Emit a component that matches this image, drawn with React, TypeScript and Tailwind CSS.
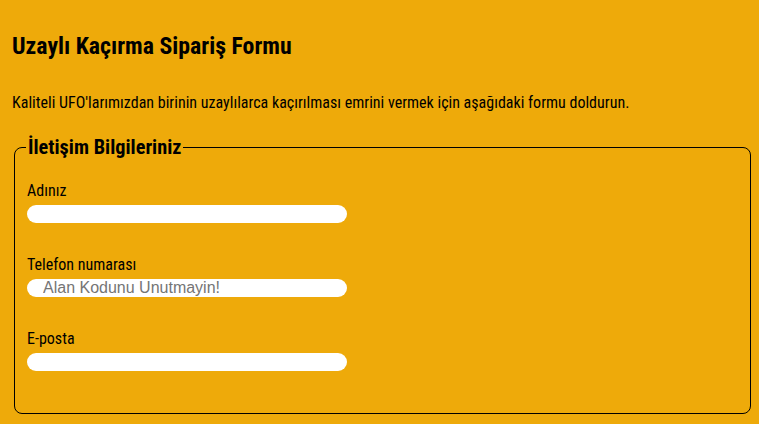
import React from 'react';

export default function App() {
  const fields = [
    { id: 'name', label: 'Adınız', placeholder: '' },
    { id: 'phone', label: 'Telefon numarası', placeholder: 'Alan Kodunu Unutmayin!' },
    { id: 'email', label: 'E-posta', placeholder: '' },
  ];

  return (
    <div className="min-h-[424px] bg-[#eeaa0a] pl-3 pr-2 pt-[32px] text-black font-['Roboto',sans-serif] [font-stretch:condensed]">
      <h1 className="text-[23.8px] font-bold leading-[28px]">Uzaylı Kaçırma Sipariş Formu</h1>
      <p className="mt-[33px] text-[16px] leading-[20px]">
        Kaliteli UFO'larımızdan birinin uzaylılarca kaçırılması emrini vermek için aşağıdaki formu doldurun.
      </p>

      <fieldset className="mt-[22px] ml-[2px] border border-black rounded-lg px-3 pb-[42px]">
        <legend className="-ml-px px-[2px] text-[20.3px] font-bold leading-[24px]">İletişim Bilgileriniz</legend>
        {fields.map((f, i) => (
          <div key={f.id} className={i === 0 ? 'mt-[22px]' : 'mt-[32px]'}>
            <label htmlFor={f.id} className="block text-[16px] leading-[20px]">{f.label}</label>
            <input
              id={f.id}
              type="text"
              placeholder={f.placeholder}
              className="mt-[4px] block h-[18px] w-[320px] rounded-full bg-white px-4 text-[16px] font-['Liberation_Sans',sans-serif] [font-stretch:normal] placeholder:text-[#757575] outline-none"
            />
          </div>
        ))}
      </fieldset>
    </div>
  );
}
